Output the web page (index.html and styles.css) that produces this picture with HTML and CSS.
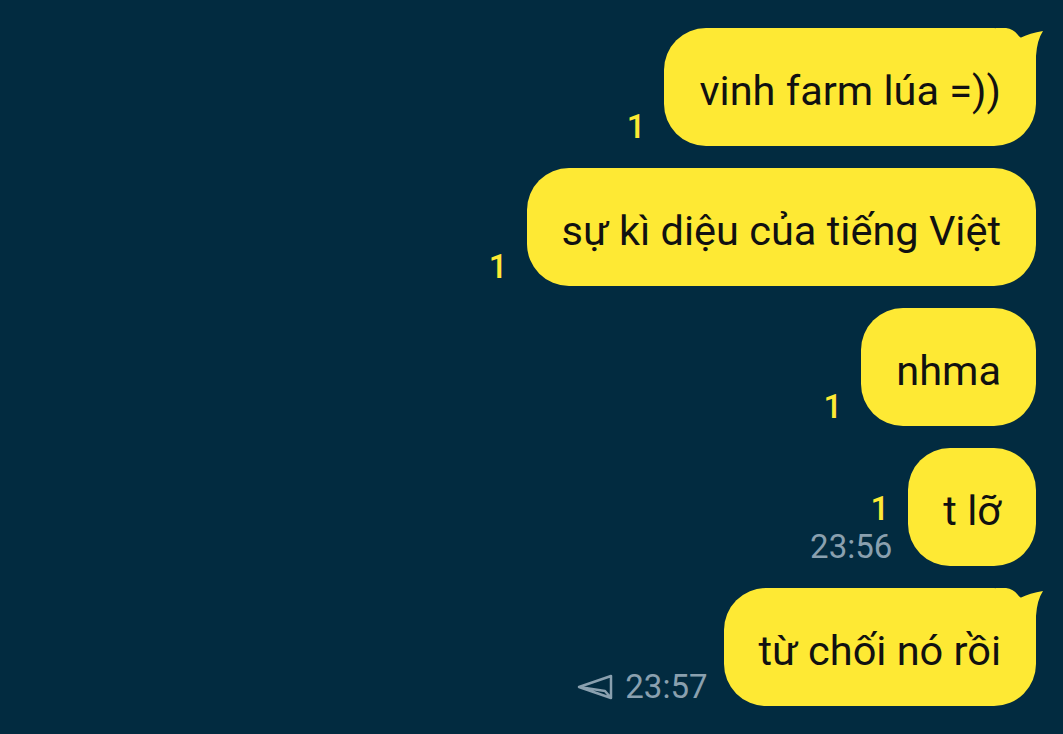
FILE: index.html
```html
<!DOCTYPE html>
<html lang="vi">
<head>
    <meta charset="UTF-8">
    <meta name="viewport" content="width=device-width, initial-scale=1.0">
    <title>Chat</title>
    <link rel="stylesheet" href="styles.css">
</head>
<body>

    <!-- Danh sách tin nhắn -->
    <div class="chat">

        <div class="row">
            <div class="meta">
                <span class="unread">1</span>
            </div>
            <div class="bubble tail">
                vinh farm lúa =))
                <svg class="tail-shape" width="48" height="44" viewBox="0 0 48 44"><path d="M0,0 L10,0 Q19,1 24,10 Q34,5 47,3 Q41,12 40,28 L40,44 L0,44 Z"/></svg>
            </div>
        </div>

        <div class="row">
            <div class="meta">
                <span class="unread">1</span>
            </div>
            <div class="bubble">sự kì diệu của tiếng Việt</div>
        </div>

        <div class="row">
            <div class="meta">
                <span class="unread">1</span>
            </div>
            <div class="bubble">nhma</div>
        </div>

        <div class="row">
            <div class="meta">
                <span class="unread">1</span>
                <span class="time">23:56</span>
            </div>
            <div class="bubble">t lỡ</div>
        </div>

        <div class="row">
            <div class="meta">
                <span class="time">
                    <svg class="sending" width="36" height="26" viewBox="0 0 36 26"><path d="M2,13 L34,2 L34,24 Z M2,13 L28,17 L34,24"/></svg>
                    23:57
                </span>
            </div>
            <div class="bubble tail">
                từ chối nó rồi
                <svg class="tail-shape" width="48" height="44" viewBox="0 0 48 44"><path d="M0,0 L10,0 Q19,1 24,10 Q34,5 47,3 Q41,12 40,28 L40,44 L0,44 Z"/></svg>
            </div>
        </div>

    </div>

</body>
</html>
```

FILE: styles.css
```css
/* Estilos Gerais */
* {
    box-sizing: border-box;
    margin: 0;
    padding: 0;
}

body {
    background: #022b40;
    font-family: 'Roboto', 'Noto Sans', sans-serif;
    height: 734px;
    overflow: hidden;
}

.chat {
    display: flex;
    flex-direction: column;
    align-items: flex-end;
    gap: 22px;
    padding: 28px 27px 0 0;
}

.row {
    display: flex;
    align-items: flex-end;
    gap: 16px;
}

/* Lượt đọc và giờ */
.meta {
    display: flex;
    flex-direction: column;
    align-items: flex-end;
    font-size: 33px;
    line-height: 38px;
}

.unread {
    color: #fee934;
    font-weight: 500;
    padding-right: 3px;
}

.time {
    color: #8aa0af;
    display: flex;
    align-items: center;
    gap: 12px;
}

.sending {
    fill: none;
    stroke: #8aa0af;
    stroke-width: 2.5;
    stroke-linejoin: round;
}

/* Bong bóng */
.bubble {
    position: relative;
    height: 118px;
    padding: 6px 35px 0 35px;
    display: flex;
    align-items: center;
    background: #fee934;
    color: #111;
    font-size: 41.5px;
    border-radius: 42px;
    white-space: nowrap;
}

.tail-shape {
    position: absolute;
    top: 0;
    right: -8px;
    fill: #fee934;
}
```
